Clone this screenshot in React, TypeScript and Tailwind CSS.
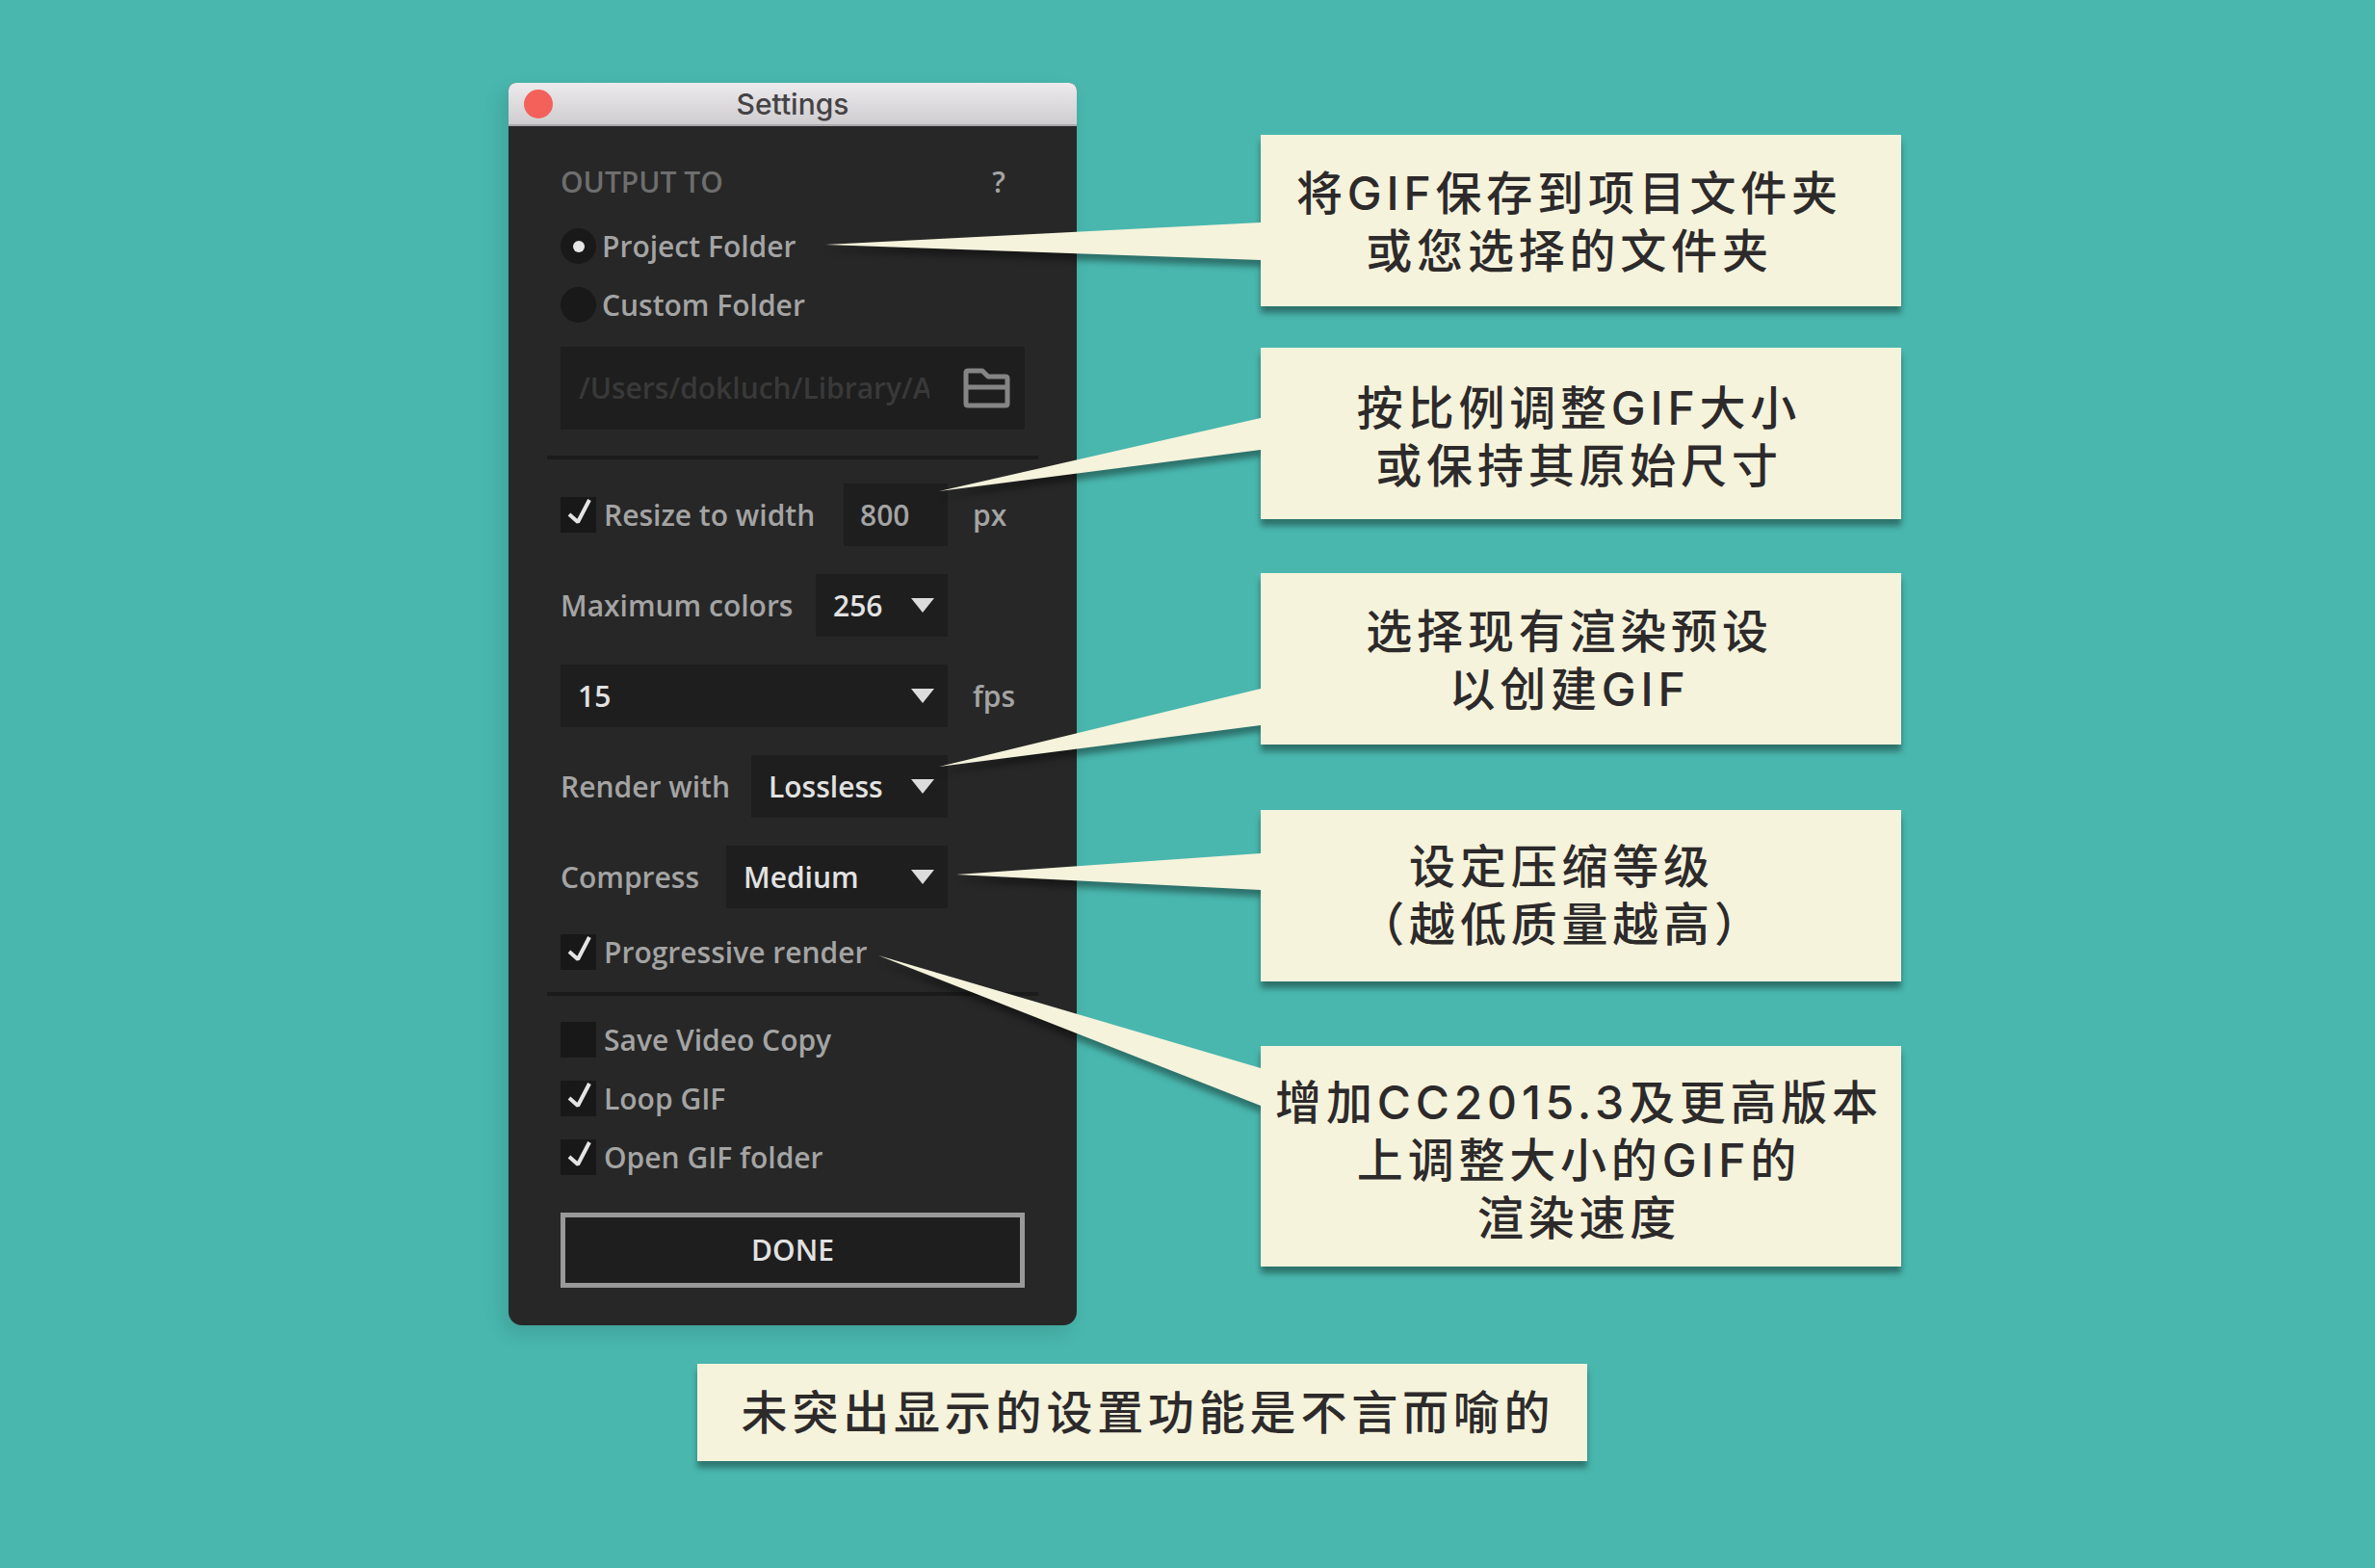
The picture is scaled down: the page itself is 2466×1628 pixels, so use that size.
import React from "react";
import clsx from "clsx";

interface CalloutProps {
  lines: string[];
  className?: string;
  pointerClassName: string;
  width: number;
  height: number;
  points: string;
}

const Callout: React.FC<CalloutProps> = (props) => {
  const { lines, className, pointerClassName, width, height, points } = props;
  return (
    <div
      className={clsx(
        "relative flex flex-col items-center justify-center bg-[#f5f3dc] text-5xl leading-[60px] font-medium tracking-widest text-[#2d2a2b] drop-shadow-[0_7px_3px_rgba(0,0,0,0.38)]",
        className,
      )}
    >
      {lines.map((line) => (
        <p key={line} className="whitespace-nowrap">
          {line}
        </p>
      ))}
      <svg
        className={clsx("absolute right-full", pointerClassName)}
        width={width}
        height={height}
        viewBox={`0 0 ${width} ${height}`}
        aria-hidden="true"
      >
        <polygon points={points} fill="#f5f3dc" />
      </svg>
    </div>
  );
};

const RadioRow: React.FC<{ label: string; checked?: boolean }> = ({
  label,
  checked,
}) => {
  return (
    <label className="flex h-[37px] items-center gap-[6px]">
      <span className="grid">
        <input
          type="radio"
          name="output"
          defaultChecked={checked}
          className="peer col-start-1 row-start-1 size-[37px] appearance-none rounded-full bg-[#191919]"
        />
        <span className="pointer-events-none invisible col-start-1 row-start-1 size-3 place-self-center rounded-full bg-[#e6e6e6] peer-checked:visible" />
      </span>
      {label}
    </label>
  );
};

const CheckRow: React.FC<{ label: string; checked?: boolean }> = ({
  label,
  checked,
}) => {
  return (
    <label className="flex h-[37px] items-center gap-2">
      <span className="grid">
        <input
          type="checkbox"
          defaultChecked={checked}
          className="peer col-start-1 row-start-1 size-[37px] appearance-none bg-[#181818]"
        />
        <svg
          className="pointer-events-none invisible col-start-1 row-start-1 size-[37px] peer-checked:visible"
          viewBox="0 0 37 37"
          fill="none"
          stroke="#e4e4e4"
          strokeWidth="4"
        >
          <path d="M9 18 L18 26 L30 3" strokeLinejoin="bevel" />
        </svg>
      </span>
      {label}
    </label>
  );
};

const Dropdown: React.FC<{
  id: string;
  value: string;
  className?: string;
}> = ({ id, value, className }) => {
  return (
    <div className={clsx("relative", className)}>
      <select
        id={id}
        defaultValue={value}
        className="h-[65px] w-full appearance-none bg-[#1e1e1e] pl-[18px] text-[#e2e2e2]"
      >
        <option>{value}</option>
      </select>
      <svg
        className="pointer-events-none absolute top-[25px] right-[14px]"
        width="24"
        height="15"
        viewBox="0 0 24 15"
      >
        <path d="M0 0 H24 L12 15 Z" fill="#dcdcdc" />
      </svg>
    </div>
  );
};

const Divider = () => <hr className="-mx-[14px] h-1 border-0 bg-[#1b1b1b]" />;

const SettingsWindow = () => {
  return (
    <section className="w-[590px] shrink-0 self-start overflow-hidden rounded-t-lg rounded-b-[14px] bg-[#272727] font-['Open_Sans',sans-serif] text-[30px] leading-10 font-semibold text-[#a4a4a4] shadow-[-6px_8px_20px_rgba(0,0,0,0.12)]">
      <header className="relative flex h-[45px] items-center justify-center border-b-2 border-[#a9a7a9] bg-linear-to-b from-[#edeaed] to-[#cfcdcf]">
        <button
          aria-label="Close"
          className="absolute left-4 size-[30px] rounded-full bg-[#f4605a]"
        />
        <h1 className="font-['Inter',sans-serif] text-[30px] font-medium text-[#454345]">
          Settings
        </h1>
      </header>
      <div className="flex flex-col px-[54px] pt-[38px] pb-[39px]">
        <div className="flex justify-between pr-5">
          <h2 className="text-[#6e6e6e]">OUTPUT TO</h2>
          <button aria-label="Help">?</button>
        </div>
        <div className="mt-7 flex flex-col gap-6">
          <RadioRow label="Project Folder" checked />
          <RadioRow label="Custom Folder" />
        </div>
        <div className="mt-[25px] mb-[27px] flex h-[86px] items-center justify-between bg-[#1e1e1e] pr-[15px] pl-[19px]">
          <input
            aria-label="Folder path"
            defaultValue="/Users/dokluch/Library/Application Support"
            disabled
            className="w-[364px] text-[#393939]"
          />
          <button aria-label="Choose folder">
            <svg
              width="49"
              height="42"
              viewBox="0 0 49 42"
              fill="none"
              stroke="#858585"
              strokeWidth="5"
              strokeLinejoin="round"
            >
              <path d="M3 37 V5 Q3 3 5 3 H20 L26 9 H44 Q46 9 46 11 V37 Q46 39 44 39 H5 Q3 39 3 37 Z M3 20 H46" />
            </svg>
          </button>
        </div>
        <Divider />
        <div className="mt-[25px] mb-[27px] flex flex-col gap-[29px]">
          <div className="flex items-center gap-[26px]">
            <div className="flex w-[402px] items-center justify-between">
              <CheckRow label="Resize to width" checked />
              <input
                aria-label="Width"
                defaultValue="800"
                className="h-[65px] w-[108px] bg-[#1e1e1e] pl-[17px]"
              />
            </div>
            <span>px</span>
          </div>
          <div className="flex w-[402px] items-center justify-between">
            <label htmlFor="colors">Maximum colors</label>
            <Dropdown id="colors" value="256" className="w-[137px]" />
          </div>
          <div className="flex items-center gap-[26px]">
            <Dropdown id="fps" value="15" className="w-[402px]" />
            <label htmlFor="fps">fps</label>
          </div>
          <div className="flex w-[402px] items-center justify-between">
            <label htmlFor="render">Render with</label>
            <Dropdown id="render" value="Lossless" className="w-[204px]" />
          </div>
          <div className="flex w-[402px] items-center justify-between">
            <label htmlFor="compress">Compress</label>
            <Dropdown id="compress" value="Medium" className="w-[230px]" />
          </div>
        </div>
        <div className="mb-[23px]">
          <CheckRow label="Progressive render" checked />
        </div>
        <Divider />
        <div className="mt-[27px] flex flex-col gap-6">
          <CheckRow label="Save Video Copy" />
          <CheckRow label="Loop GIF" checked />
          <CheckRow label="Open GIF folder" checked />
        </div>
        <button className="mt-[39px] h-[78px] border-[5px] border-[#999999] bg-[#1e1e1e] text-[#e2e2e2]">
          DONE
        </button>
      </div>
    </section>
  );
};

const Notes = () => {
  return (
    <div className="flex w-[665px] flex-col pt-[54px]">
      <Callout
        lines={["将GIF保存到项目文件夹", "或您选择的文件夹"]}
        className="h-[178px] pt-1 pr-6"
        pointerClassName="top-[91px]"
        width={452}
        height={39}
        points="0,23 452,0 452,39"
      />
      <Callout
        lines={["按比例调整GIF大小", "或保持其原始尺寸"]}
        className="mt-[43px] h-[178px] pt-2 pr-1"
        pointerClassName="top-[73px]"
        width={334}
        height={76}
        points="0,76 334,0 334,33"
      />
      <Callout
        lines={["选择现有渲染预设", "以创建GIF"]}
        className="mt-14 h-[178px] pt-1 pr-6"
        pointerClassName="top-[120px]"
        width={334}
        height={81}
        points="0,81 334,0 334,38"
      />
      <Callout
        lines={["设定压缩等级", "（越低质量越高）"]}
        className="mt-[68px] h-[178px] pr-10"
        pointerClassName="top-[45px]"
        width={316}
        height={38}
        points="0,22 316,0 316,38"
      />
      <Callout
        lines={["增加CC2015.3及更高版本", "上调整大小的GIF的", "渲染速度"]}
        className="mt-[67px] h-[229px] pt-2 pr-1"
        pointerClassName="bottom-[167px]"
        width={397}
        height={156}
        points="0,0 397,117 397,156"
      />
    </div>
  );
};

export default function App() {
  return (
    <main className="flex min-h-screen justify-center bg-[#49b7ae] pt-[86px] pl-9 font-['Inter','Noto_Sans_CJK_SC',sans-serif]">
      <div>
        <div className="flex gap-[191px]">
          <SettingsWindow />
          <Notes />
        </div>
        <p className="mt-10 ml-[196px] flex h-[101px] w-[924px] items-center justify-center bg-[#f5f3dc] pl-3 text-5xl font-medium tracking-widest text-[#2d2a2b] shadow-[0_7px_6px_rgba(0,0,0,0.35)]">
          未突出显示的设置功能是不言而喻的
        </p>
      </div>
    </main>
  );
}
